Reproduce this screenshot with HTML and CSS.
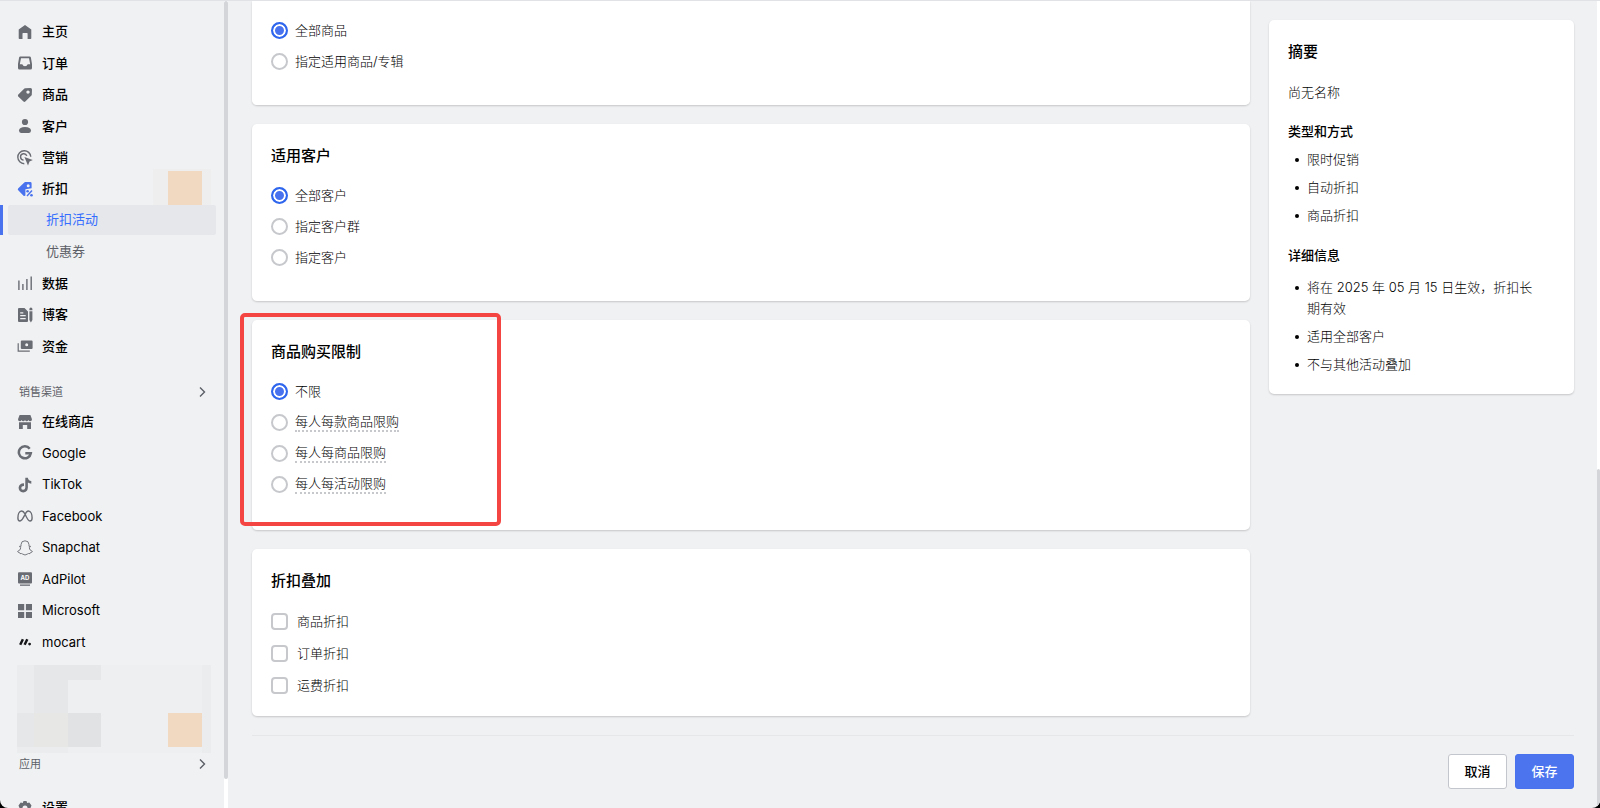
FILE: index.html
```html
<!DOCTYPE html>
<html lang="zh-CN">
<head>
<meta charset="utf-8">
<title>折扣活动</title>
<link rel="stylesheet" href="styles.css">
</head>
<body>
<div class="app">
  <aside class="sidebar">
    <div class="sidebar-body">
    <nav aria-label="主导航">
      <ul class="menu menu-main">
        <li><a class="item" href="#"><svg class="icon" viewBox="0 0 16 16"><path d="M8 1 14.3 5.4V14.2Q14.3 15 13.5 15H10.6V9.6Q10.6 9 10 9H6.100Q5.500 9 5.500 9.600V15H2.500Q1.700 15 1.700 14.200V5.400Z"/></svg>主页</a></li>
        <li><a class="item" href="#"><svg class="icon" viewBox="0 0 16 16"><path fill-rule="evenodd" d="M3.400 1.500H12.600Q13.700 1.500 13.900 2.600L15 9V13Q15 14.500 13.500 14.500H2.500Q1 14.500 1 13V9L2.100 2.600Q2.300 1.500 3.400 1.500ZM4 3.200 2.800 9.200H5.300Q6 11.200 8 11.200T10.700 9.200H13.200L12 3.200Z"/></svg>订单</a></li>
        <li><a class="item" href="#"><svg class="icon" viewBox="0 0 16 16"><path fill-rule="evenodd" d="M8.300 1.200 13.500 1Q15 1 15 2.500L14.800 7.700Q14.800 8.200 14.400 8.600L8.300 14.600Q7.400 15.400 6.500 14.600L1.200 9.400Q.5 8.500 1.300 7.600L7.400 1.600Q7.800 1.200 8.300 1.200ZM11 3.400A1.700 1.700 0 1 0 11 6.800 1.700 1.700 0 1 0 11 3.400Z"/></svg>商品</a></li>
        <li><a class="item" href="#"><svg class="icon" viewBox="0 0 16 16"><circle cx="8" cy="4" r="3.100"/><path d="M2 12.600Q2.200 9 8 9T14 12.600Q14 15 12 15H4Q2 15 2 12.600Z"/></svg>客户</a></li>
        <li><a class="item" href="#"><svg class="icon" viewBox="0 0 16 16"><path class="line" d="M13.800 6.800A6.500 6.500 0 1 0 7.300 13.700M9.800 5.900A3.200 3.200 0 1 0 6.600 10.100"/><path d="M7.400 6.900 15.800 10.100 12.500 11.600 11 15.500Z"/></svg>营销</a></li>
        <li class="mosaic-host"><a class="item item-open" href="#"><svg class="icon" viewBox="0 0 16 16"><path fill-rule="evenodd" d="M8.300 1 13.300 1Q14.600 1 14.600 2.400V7.300L8.400 8.200V14.600Q7.300 15.300 6.300 14.400L1 9.100Q.5 8.300 1.100 7.600L7.300 1.500Q7.700 1 8.300 1ZM11.200 3.300A1.500 1.500 0 1 0 11.200 6.300 1.500 1.500 0 1 0 11.200 3.300Z"/><path class="line" d="M10 15 15 9.500"/><circle cx="10.600" cy="10.200" r="1.300"/><circle cx="14.500" cy="14.200" r="1.300"/></svg>折扣</a><span class="patch"></span></li>
        <li class="current"><a class="item subitem" href="#" aria-current="page">折扣活动</a></li>
        <li><a class="item subitem" href="#">优惠券</a></li>
        <li><a class="item" href="#"><svg class="icon" viewBox="0 0 16 16"><path class="line" d="M1.900 15V5.500M5.900 15V9M9.900 15V4M14.200 15V1.500"/></svg>数据</a></li>
        <li><a class="item" href="#"><svg class="icon" viewBox="0 0 16 16"><path fill-rule="evenodd" d="M2 1H7.500L11 4.600V14Q11 15 10 15H2Q1 15 1 14V2Q1 1 2 1ZM3.200 5.200V6.500H6.300V5.200ZM3.200 8V9.300H8.700V8ZM3.200 10.900V12.200H8.700V10.900Z"/><path d="M12.400 2Q12.400.5 13.900.5T15.400 2V3.300H12.400ZM12.400 4.300H15.400V13L13.900 15.500 12.400 13Z"/></svg>博客</a></li>
        <li><a class="item" href="#"><svg class="icon" viewBox="0 0 16 16"><path fill-rule="evenodd" d="M4.800 2.500H14.600Q15.600 2.500 15.600 3.500V10Q15.600 11 14.600 11H4.800Q3.800 11 3.800 10V3.500Q3.800 2.500 4.800 2.500ZM9.700 5.200A1.500 1.500 0 1 0 9.700 8.200 1.500 1.500 0 1 0 9.700 5.200Z"/><path class="thin" d="M1.200 5.200V13.100H12.800"/></svg>资金</a></li>
      </ul>
    </nav>
    <button class="section" type="button">销售渠道<svg class="chevron" viewBox="0 0 12 12"><path d="M4 1.500 8.500 6 4 10.500"/></svg></button>
    <nav aria-label="销售渠道">
      <ul class="menu menu-channels">
        <li><a class="item" href="#"><svg class="icon" viewBox="0 0 16 16"><path d="M2.600 1H13.400L15 5.200Q15 7.200 13.200 7.200 11.800 7.200 11.400 6 10.800 7.200 9.700 7.200 8.500 7.200 8 6 7.500 7.200 6.300 7.200 5.200 7.200 4.600 6 4.200 7.200 2.800 7.200 1 7.200 1 5.200ZM2 8.200H14V15H10.200V11H5.800V15H2Z"/></svg>在线商店</a></li>
        <li><a class="item item-latin" href="#"><svg class="icon" viewBox="0 0 16 16"><path class="bold" d="M12.700 3.700A6 6 0 1 0 13.800 8.200H8.300"/></svg>Google</a></li>
        <li><a class="item item-latin" href="#"><svg class="icon" viewBox="0 0 16 16"><path d="M8.300.7H10.900Q11.200 3.600 14.300 4V6.700Q12.400 6.700 10.900 5.600V10.600Q10.600 15.300 6.200 15.400 1.700 15 1.600 10.800 2 6.300 7 6.300V9Q4.300 8.900 4.200 10.900 4.400 12.700 6.200 12.800 8.100 12.700 8.300 10.700Z"/></svg>TikTok</a></li>
        <li><a class="item item-latin" href="#"><svg class="icon" viewBox="0 0 16 16"><path class="line" d="M8 6Q6.500 3 4.600 3C2 3 .9 7 .9 10Q.9 13 3 13C5 13 6.500 9.500 8 6.500Q9.500 3 11.400 3C14 3 15.100 7 15.100 10Q15.100 13 13 13C11 13 9.500 9.500 8 6Z"/></svg>Facebook</a></li>
        <li><a class="item item-latin" href="#"><svg class="icon" viewBox="0 0 16 16"><path class="hair" d="M8 .8Q12 .8 12 4.700V6.400L13.400 6.200Q13.800 7 12.200 7.800 12.600 10.500 15.400 11.400 15.300 12.400 13.400 12.700L13 13.600Q11.400 13.200 10.300 14.100 8 15.900 5.700 14.100 4.600 13.200 3 13.600L2.600 12.700Q.7 12.400.6 11.400 3.400 10.500 3.800 7.800 2.200 7 2.600 6.200L4 6.400V4.700Q4 .8 8 .8Z"/></svg>Snapchat</a></li>
        <li><a class="item item-latin" href="#"><svg class="icon" viewBox="0 0 16 16"><rect x="1" y="1.200" width="14" height="11.200" rx="1"/><rect x="3" y="13.500" width="10" height="1.300"/><text class="ad" x="8" y="9" text-anchor="middle">AD</text></svg>AdPilot</a></li>
        <li><a class="item item-latin" href="#"><svg class="icon" viewBox="0 0 16 16"><path d="M1 1H7.200V7.200H1ZM8.900 1H15V7.200H8.900ZM1 8.900H7.200V15H1ZM8.900 8.900H15V15H8.900Z"/></svg>Microsoft</a></li>
        <li><a class="item item-latin" href="#"><svg class="icon icon-dark" viewBox="0 0 16 16"><path class="bold" d="M3.200 10.700 5.900 5.300M7.600 10.700 10.300 5.300"/><circle cx="12.600" cy="10.100" r="1.400"/></svg>mocart</a></li>
      </ul>
    </nav>
    <div class="mosaic" aria-hidden="true">
      <i class="m1"></i><i class="m2"></i><i class="m2"></i><i></i><i></i><i class="m1"></i>
      <i class="m1"></i><i class="m2"></i><i></i><i></i><i></i><i class="m1"></i>
      <i class="m2"></i><i class="m3"></i><i class="m4"></i><i></i><i class="m5"></i><i class="m1"></i>
      <i class="m1"></i><i class="m1"></i><i></i><i></i><i></i><i class="m1"></i>
    </div>
    <button class="section section-apps" type="button">应用<svg class="chevron" viewBox="0 0 12 12"><path d="M4 1.500 8.500 6 4 10.500"/></svg></button>
    <a class="item item-settings" href="#"><svg class="icon" viewBox="0 0 16 16"><path fill-rule="evenodd" d="M6.500 1H9.500L10.200 3 12.300 2.600 14.500 5.500 13.500 8 14.500 10.500 12.300 13.400 10.200 13 9.500 15H6.500L5.800 13 3.700 13.400 1.500 10.500 2.500 8 1.500 5.500 3.700 2.600 5.800 3ZM8 5.500A2.500 2.500 0 1 0 8 10.500 2.500 2.500 0 1 0 8 5.500Z"/></svg>设置</a>
    </div>
    <div class="rail" aria-hidden="true"><span class="rail-thumb"></span></div>
  </aside>

  <main class="content">
    <form class="page">
      <div class="columns">
        <div class="cards">
          <fieldset class="card card-first" aria-label="适用商品">
            <div class="options">
              <label class="option"><input type="radio" name="goods" checked><span>全部商品</span></label>
              <label class="option"><input type="radio" name="goods"><span>指定适用商品/专辑</span></label>
            </div>
          </fieldset>
          <section class="card">
            <h2 class="title">适用客户</h2>
            <div class="options">
              <label class="option"><input type="radio" name="customer" checked><span>全部客户</span></label>
              <label class="option"><input type="radio" name="customer"><span>指定客户群</span></label>
              <label class="option"><input type="radio" name="customer"><span>指定客户</span></label>
            </div>
          </section>
          <section class="card marked">
            <h2 class="title">商品购买限制</h2>
            <div class="options">
              <label class="option"><input type="radio" name="limit" checked><span>不限</span></label>
              <label class="option"><input type="radio" name="limit"><span class="hint">每人每款商品限购</span></label>
              <label class="option"><input type="radio" name="limit"><span class="hint">每人每商品限购</span></label>
              <label class="option"><input type="radio" name="limit"><span class="hint">每人每活动限购</span></label>
            </div>
          </section>
          <section class="card card-checks">
            <h2 class="title">折扣叠加</h2>
            <div class="options">
              <label class="option"><input type="checkbox"><span>商品折扣</span></label>
              <label class="option"><input type="checkbox"><span>订单折扣</span></label>
              <label class="option"><input type="checkbox"><span>运费折扣</span></label>
            </div>
          </section>
        </div>
        <aside class="card summary">
          <h2 class="title">摘要</h2>
          <p class="name">尚无名称</p>
          <h3 class="subtitle">类型和方式</h3>
          <ul class="facts">
            <li>限时促销</li>
            <li>自动折扣</li>
            <li>商品折扣</li>
          </ul>
          <h3 class="subtitle subtitle-detail">详细信息</h3>
          <ul class="facts">
            <li>将在 2025 年 05 月 15 日生效，折扣长期有效</li>
            <li>适用全部客户</li>
            <li>不与其他活动叠加</li>
          </ul>
        </aside>
      </div>
      <footer class="actions">
        <button class="btn" type="button">取消</button>
        <button class="btn btn-primary" type="submit">保存</button>
      </footer>
    </form>
    <div class="scroll" aria-hidden="true"><span class="scroll-thumb"></span></div>
  </main>
</div>
</body>
</html>
```
FILE: styles.css
```css
*, *::before, *::after { box-sizing: border-box; }

body {
  margin: 0;
  background: #000;
  color: #000;
  font: 13px/21px Inter, "Noto Sans CJK SC", sans-serif;
}

ul, h2, h3, p, fieldset { margin: 0; padding: 0; border: 0; list-style: none; }

.app {
  display: flex;
  height: 100vh;
  overflow: hidden;
  border-top: 1px solid #e1e2e5;
  border-radius: 0 0 8px 8px;
  background: #f0f1f3;
}

/* Sidebar */
.sidebar { display: flex; flex: 0 0 228px; }
.sidebar-body { flex: 1; padding-top: 15px; }
.menu { display: grid; grid-auto-rows: 1fr; }
.menu-main { min-height: 346px; }
.menu-channels { min-height: 252px; }

.item {
  display: flex;
  align-items: center;
  gap: 9px;
  height: 100%;
  padding-left: 17px;
  color: #000;
  font-weight: 500;
  text-decoration: none;
}
.item-latin { font-weight: 400; }
.subitem { padding-left: 46px; color: #5c5f66; font-weight: 400; }
.item-settings { height: 31px; margin-top: 17px; }

.icon { flex: none; width: 16px; height: 16px; fill: #696c73; }
.icon path { stroke: #696c73; stroke-width: 0; }
.icon .line { fill: none; stroke-width: 1.4; }
.icon .thin { fill: none; stroke-width: 1.2; }
.icon .hair { fill: none; stroke-width: 0.9; }
.icon .bold { fill: none; stroke-width: 2.5; }
.icon-dark { fill: #17181a; }
.icon-dark .bold { stroke: #17181a; }
.item-open .icon { fill: #4872ee; }
.item-open .icon path { stroke: #4872ee; }
.icon .ad { fill: #fff; font-size: 6px; font-weight: 700; }

.current {
  display: flex;
  gap: 5px;
  padding: 0 8px 1px 0;
}
.current::before { content: ""; width: 3px; background: #4872ee; }
.current .item {
  flex: 1;
  padding-left: 38px;
  border-radius: 2px;
  background: #e6e7ea;
  color: #356dff;
}

.mosaic-host { position: relative; }
.patch {
  position: absolute;
  right: 13px;
  bottom: 0;
  width: 58px;
  height: 36px;
  border: solid #eeeeee;
  border-width: 2px 9px 0 15px;
  background: #f0d8c1;
}

.section {
  display: flex;
  align-items: center;
  justify-content: space-between;
  width: 100%;
  height: 28px;
  margin-top: 16px;
  padding: 0 16px 0 19px;
  border: 0;
  background: none;
  color: #5c5f66;
  font: inherit;
  font-size: 11px;
}
.section-apps { height: 22px; margin-top: 0; }
.chevron { width: 12px; height: 12px; fill: none; stroke: #5c5f66; stroke-width: 1.4; }

.mosaic {
  display: grid;
  grid-template-columns: 17px 34px 33px 67px 34px 9px;
  grid-template-rows: 15px 33px 34px 6px;
  width: 194px;
  margin: 7px 0 0 17px;
  background: #eeeff1;
}
.m1 { background: #ebecee; }
.m2 { background: #e6e7e9; }
.m3 { background: #e7e7e6; }
.m4 { background: #e1e2e4; }
.m5 { background: #f0d8c1; }

.rail { width: 4px; background: #fff; }
.rail-thumb { display: block; height: calc(100% - 29px); border-radius: 2px; background: #d3d5d8; }

/* Main area */
.content { display: flex; flex: 1; min-width: 0; }
.page { flex: 1; padding: 0 23px 0 24px; }
.columns {
  display: grid;
  grid-template-columns: minmax(0, 1fr) 305px;
  align-items: start;
  gap: 19px;
}
.cards { display: grid; gap: 19px; }
.card {
  padding: 20px 19px 28px;
  border-radius: 5px;
  background: #fff;
  box-shadow: 0 1px 2px rgb(0 0 0 / 18%);
}
.card-first { padding-top: 14px; border-radius: 0 0 5px 5px; }
.card-checks { padding-bottom: 15px; }
.title { font-size: 15px; font-weight: 500; line-height: 24px; }
.title + .options { margin-top: 12px; }

.option { display: flex; align-items: center; gap: 7px; width: fit-content; height: 31px; font-weight: 300; }
.card-checks .option { gap: 9px; height: 32px; }
.option input {
  appearance: none;
  width: 17px;
  height: 17px;
  margin: 0;
  border: 2px solid #c6c8cc;
  border-radius: 4px;
  background: #fff;
}
.option input[type="radio"] { border-radius: 50%; }
.option input[type="radio"]:checked {
  border-color: #2f66ee;
  background: #4872ee;
  box-shadow: inset 0 0 0 2px #fff;
}
.hint { border-bottom: 2px dotted #c6c8cc; line-height: 17px; }

.marked { position: relative; padding-bottom: 30px; }
.marked::after {
  content: "";
  position: absolute;
  top: -7px;
  left: -12px;
  width: 261px;
  height: 213px;
  border: 4px solid #f54542;
  border-radius: 5px;
  pointer-events: none;
}

.summary { margin-top: 19px; padding-bottom: 19px; font-weight: 300; }
.name { margin-top: 18px; }
.subtitle { margin-top: 18px; font-size: 13px; font-weight: 500; line-height: 21px; }
.facts { display: grid; gap: 7px; margin-top: 7px; padding: 0 12px 0 19px; }
.facts li { position: relative; }
.facts li::before {
  content: "";
  position: absolute;
  top: 9px;
  left: -12px;
  width: 4px;
  height: 4px;
  border-radius: 50%;
  background: #000;
}
.subtitle-detail { margin-top: 19px; }
.subtitle-detail + .facts { margin-top: 11px; }

.actions {
  display: flex;
  justify-content: flex-end;
  gap: 8px;
  margin-top: 19px;
  padding-top: 18px;
  border-top: 1px solid #e6e7e9;
}
.btn {
  min-width: 59px;
  height: 35px;
  padding: 0 14px;
  border: 1px solid #c3c6cc;
  border-radius: 3px;
  background: #fff;
  color: #000;
  font: inherit;
  font-weight: 500;
}
.btn-primary { border-color: #4872ee; background: #4c74ee; color: #fff; }

.scroll { display: flex; flex-direction: column; justify-content: flex-end; width: 3px; background: #fff; }
.scroll-thumb { height: 42%; border-radius: 2px 2px 0 0; background: #d3d5d8; }
```
